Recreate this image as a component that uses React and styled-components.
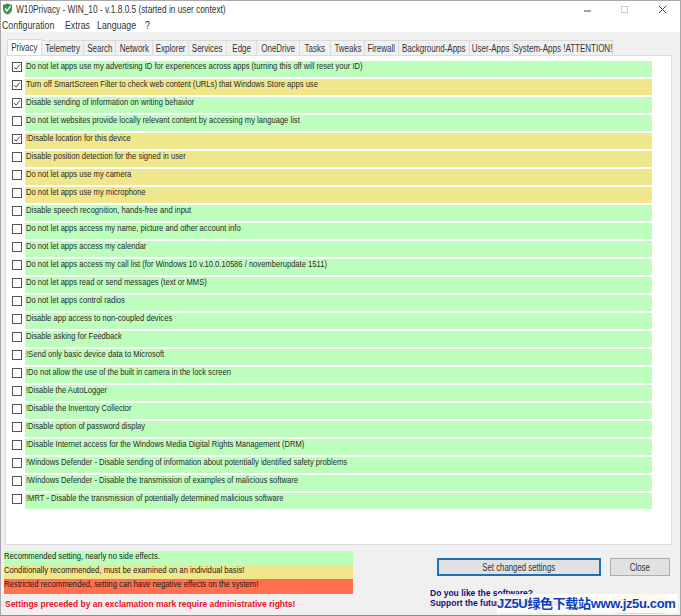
import React from "react";
import styled, { createGlobalStyle } from "styled-components";

const Global = createGlobalStyle`
  html, body { margin: 0; padding: 0; background: #f0f0f0; }
  body { font-family: "Liberation Sans", sans-serif; font-size: 10px; color: #222; }
`;
const Win = styled.div`
  width: 681px; height: 616px; box-sizing: border-box; position: relative; overflow: hidden;
  display: flex; flex-direction: column; background: #f0f0f0;
  border: 1px solid #a9a9a9; border-bottom-color: #8d8d8d;
`;
const Squeeze = styled.span`
  display: inline-block; white-space: nowrap; transform: scaleX(${p => p.$x || 0.8}); transform-origin: ${p => p.$o || "left"} center;
`;
const TitleBar = styled.div`
  height: 16px; flex: none; background: #fff; display: flex; align-items: center; padding: 0 0 0 1px;
  font-size: 10.500px; color: #333;
`;
const TitleText = styled.span` margin-left: 3px; flex: 1; white-space: nowrap; `;
const WinButtons = styled.div` display: flex; align-items: center; gap: 30px; margin-right: 13px; `;
const MenuBar = styled.div`
  height: 15px; flex: none; background: #fff; display: flex; padding: 0 0 0 1px;
  font-size: 11px; align-items: center; color: #333;
`;
const MenuItem = styled.div` width: ${p => p.$w}px; flex: none; `;
const TabArea = styled.div` flex: none; display: flex; height: 23px; align-items: flex-end; padding-left: 7px; `;
const Tab = styled.div`
  box-sizing: border-box; width: ${p => p.$w}px; height: ${p => p.$active ? 16 : 15}px; flex: none;
  display: flex; align-items: center; justify-content: center; white-space: nowrap;
  font-size: 10px; color: #333;
  background: ${p => p.$active ? "#fff" : "#f0f0f0"};
  border: 1px solid #dadada; border-bottom: 0; margin-left: -1px;
`;
const Panel = styled.div`
  flex: none; height: 490px; margin: 0 8px 0 4px; background: #fff; border: 1px solid #dcdcdc;
  box-sizing: border-box; padding: 5px 19px 0 6px; display: flex; flex-direction: column; gap: 2px;
`;
const Row = styled.div` display: flex; align-items: flex-start; height: 16px; gap: 3px; `;
const Box = styled.span`
  width: 10px; height: 10px; box-sizing: border-box; border: 1px solid #555; flex: none; margin-top: 1px;
  background: #fff; display: flex; align-items: center; justify-content: center;
`;
const Label = styled.div`
  flex: 1; height: 16px; background: ${p => p.$tone === "y" ? "#f0e68c" : "#bdfebd"};
  font-size: 9.500px; line-height: 10px; white-space: nowrap; color: #2b2b2b; padding-left: 1px;
`;
const Footer = styled.div` flex: 1; display: flex; padding: 6px 0 0 3px; position: relative; `;
const Legend = styled.div` width: 349px; flex: none; display: flex; flex-direction: column; `;
const LegendRow = styled.div`
  height: ${p => p.$h}px; background: ${p => p.$bg}; font-size: 9.500px; line-height: 10px;
  white-space: nowrap; color: #1c1c1c;
`;
const Warning = styled.div`
  margin-top: 5px; color: #e8102a; font-weight: 700; font-size: 8.500px; letter-spacing: -0.03px; white-space: nowrap;
  padding-left: 1px;
`;
const Side = styled.div` flex: 1; padding: 7px 0 0 84px; display: flex; flex-direction: column; `;
const Buttons = styled.div` display: flex; gap: 9px; `;
const Btn = styled.div`
  box-sizing: border-box; height: 18px; width: ${p => p.$w}px; display: flex; align-items: center; justify-content: center;
  background: #e1e1e1; border: 1px solid ${p => p.$primary ? "#1f6fb5" : "#adadad"};
  ${p => p.$primary ? "box-shadow: inset 0 0 0 1px #1f6fb5;" : ""}
  font-size: 10px; color: #333;
`;
const Support = styled.div`
  margin: 12px 0 0 -7px; color: #10107d; font-weight: 700;
  font-size: 8.500px; line-height: 10px; white-space: nowrap;
`;
const Donate = styled.div`
  position: absolute; right: 9px; bottom: 1px; width: 62px; height: 20px; border-radius: 10px; background: #f7d9a8;
  text-align: center; font: 700 8px/15px "Liberation Sans", sans-serif; color: #aaa;
`;
const Watermark = styled.div`
  position: absolute; left: 496px; top: 593px; width: 181px; height: 19px; background: rgba(255,255,255,0.85); color: #0b3fc0;
  font: 700 13px/19px "Liberation Sans", "Noto Sans CJK SC", sans-serif; letter-spacing: -0.35px; white-space: nowrap;
`;

const tabs = [["Privacy",35],["Telemetry",43],["Search",33],["Network",38],["Explorer",37],["Services",39],["Edge",31],["OneDrive",44],["Tasks",32],["Tweaks",35],["Firewall",35],["Background-Apps",72],["User-Apps",44],["System-Apps !ATTENTION!",101]];
const rows = [
 ["Do not let apps use my advertising ID for experiences across apps (turning this off will reset your ID)","g",1],
 ["Turn off SmartScreen Filter to check web content (URLs) that Windows Store apps use","y",1],
 ["Disable sending of information on writing behavior","g",1],
 ["Do not let websites provide locally relevant content by accessing my language list","g",0],
 ["!Disable location for this device","y",1],
 ["Disable position detection for the signed in user","y",0],
 ["Do not let apps use my camera","y",0],
 ["Do not let apps use my microphone","y",0],
 ["Disable speech recognition, hands-free and input","g",0],
 ["Do not let apps access my name, picture and other account info","g",0],
 ["Do not let apps access my calendar","g",0],
 ["Do not let apps access my call list (for Windows 10 v.10.0.10586 / novemberupdate 1511)","g",0],
 ["Do not let apps read or send messages (text or MMS)","g",0],
 ["Do not let apps control radios","g",0],
 ["Disable app access to non-coupled devices","g",0],
 ["Disable asking for Feedback","g",0],
 ["!Send only basic device data to Microsoft","g",0],
 ["!Do not allow the use of the built in camera in the lock screen","g",0],
 ["!Disable the AutoLogger","g",0],
 ["!Disable the Inventory Collector","g",0],
 ["!Disable option of password display","g",0],
 ["!Disable Internet access for the Windows Media Digital Rights Management (DRM)","g",0],
 ["!Windows Defender - Disable sending of information about potentially identified safety problems","g",0],
 ["!Windows Defender - Disable the transmission of examples of malicious software","g",0],
 ["!MRT - Disable the transmission of potentially determined malicious software","g",0],
];

const Shield = () => (
  <svg width="11" height="12" viewBox="0 0 11 12">
    <path d="M5.500 .5 10 2v4c0 3-2 4.500-4.500 5.500C3 10.500 1 9 1 6V2z" fill="#3f8f4a"/>
    <path d="M3 5.500 5 8l3.500-5" stroke="#e8f5e8" strokeWidth="1.400" fill="none"/>
  </svg>
);
const Check = () => (
  <svg width="8" height="8" viewBox="0 0 11 11"><path d="M1.500 5.500 4.300 8.500 9.500 2" stroke="#444" strokeWidth="1.300" fill="none"/></svg>
);
const menu = [["Configuration",63],["Extras",32],["Language",48],["?",10]];

export default function App() {
  return (
    <Win>
      <Global />
      <TitleBar>
        <Shield />
        <TitleText><Squeeze $x={0.79}>W10Privacy - WIN_10 - v.1.8.0.5 (started in user context)</Squeeze></TitleText>
        <WinButtons>
          <svg width="7" height="7" viewBox="0 0 7 7"><path d="M0 5h7" stroke="#444"/></svg>
          <svg width="7" height="7" viewBox="0 0 7 7"><rect x=".5" y=".5" width="6" height="6" fill="none" stroke="#ccc"/></svg>
          <svg width="9" height="9" viewBox="0 0 9 9"><path d="M1 1l7 7M8 1 1 8" stroke="#444"/></svg>
        </WinButtons>
      </TitleBar>
      <MenuBar>
        {menu.map(([t, w]) => <MenuItem key={t} $w={w}><Squeeze>{t}</Squeeze></MenuItem>)}
      </MenuBar>
      <TabArea>
        {tabs.map(([t, w], i) => <Tab key={t} $w={w} $active={i === 0}><Squeeze $o="center">{t}</Squeeze></Tab>)}
      </TabArea>
      <Panel>
        {rows.map(([t, tone, c]) => (
          <Row key={t}>
            <Box>{c ? <Check /> : null}</Box>
            <Label $tone={tone}><Squeeze>{t}</Squeeze></Label>
          </Row>
        ))}
      </Panel>
      <Footer>
        <Legend>
          <LegendRow $h={14} $bg="#bdfebd"><Squeeze $x={0.81}>Recommended setting, nearly no side effects.</Squeeze></LegendRow>
          <LegendRow $h={14} $bg="#f0e68c"><Squeeze $x={0.81}>Conditionally recommended, must be examined on an individual basis!</Squeeze></LegendRow>
          <LegendRow $h={15} $bg="#ff6f50"><Squeeze $x={0.81}>Restricted recommended, setting can have negative effects on the system!</Squeeze></LegendRow>
          <Warning>Settings preceded by an exclamation mark require administrative rights!</Warning>
        </Legend>
        <Side>
          <Buttons>
            <Btn $primary $w={164}><Squeeze $o="center" $x={0.78}>Set changed settings</Squeeze></Btn>
            <Btn $w={60}><Squeeze $o="center" $x={0.78}>Close</Squeeze></Btn>
          </Buttons>
          <Support>Do you like the software?<br />Support the future development</Support>
        </Side>
        <Donate>DONATE NOW</Donate>
      </Footer>
      <Watermark>JZ5U绿色下载站www.jz5u.com</Watermark>
    </Win>
  );
}
